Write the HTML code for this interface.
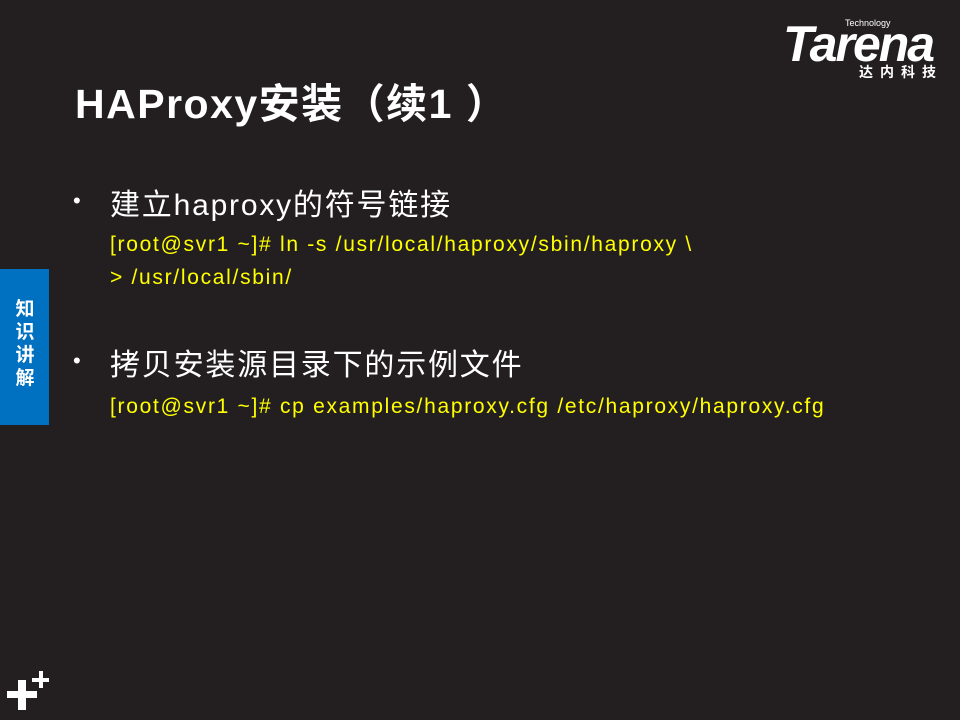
<!DOCTYPE html>
<html><head><meta charset="utf-8"><style>
html,body{margin:0;padding:0;}
body{width:960px;height:720px;background:#231f20;position:relative;overflow:hidden;font-family:"Liberation Sans","Noto Sans CJK SC",sans-serif;}
.a{position:absolute;white-space:nowrap;}
.t{left:75px;top:70px;font-size:41px;font-weight:bold;color:#fff;letter-spacing:1.5px;}
.b{color:#fff;font-size:30px;letter-spacing:1.8px;}
.dot{color:#fff;font-size:22px;}
.c{color:#ffff00;font-size:21px;letter-spacing:1.7px;}
.tab{left:0;top:269px;width:49px;height:156px;background:#0070c0;}
.tab div{position:absolute;left:13px;width:24px;text-align:center;color:#fff;font-weight:bold;font-size:19px;line-height:23px;top:29px;}
</style></head><body>
<div class="a" style="left:783px;top:18px;width:165px;height:40px;">
<div class="a" style="left:62px;top:0;font-size:9px;color:#fff;">Technology</div>
<div class="a" style="left:0;top:2px;font-size:50px;font-weight:bold;font-style:italic;color:#fff;letter-spacing:-2px;line-height:48px;">Tarena</div>
</div>
<div class="a" style="left:859px;top:62px;font-size:14px;font-weight:bold;color:#fff;letter-spacing:7px;">达内科技</div>
<div class="a t">HAProxy安装（续1 ）</div>
<div class="a dot" style="left:73px;top:188px;">•</div>
<div class="a b" style="left:110px;top:180px;">建立haproxy的符号链接</div>
<div class="a c" style="left:110px;top:233px;">[root@svr1 ~]# ln -s /usr/local/haproxy/sbin/haproxy \</div>
<div class="a c" style="left:110px;top:266px;">&gt; /usr/local/sbin/</div>
<div class="a dot" style="left:73px;top:348px;">•</div>
<div class="a b" style="left:110px;top:340px;">拷贝安装源目录下的示例文件</div>
<div class="a c" style="left:110px;top:395px;">[root@svr1 ~]# cp examples/haproxy.cfg /etc/haproxy/haproxy.cfg</div>
<div class="a tab"><div>知<br>识<br>讲<br>解</div></div>
<div class="a" style="left:7px;top:691px;width:30px;height:7px;background:#fff;"></div>
<div class="a" style="left:18px;top:680px;width:8px;height:30px;background:#fff;"></div>
<div class="a" style="left:32px;top:678px;width:17px;height:4px;background:#fff;"></div>
<div class="a" style="left:38.5px;top:671px;width:4px;height:17px;background:#fff;"></div>
</body></html>
